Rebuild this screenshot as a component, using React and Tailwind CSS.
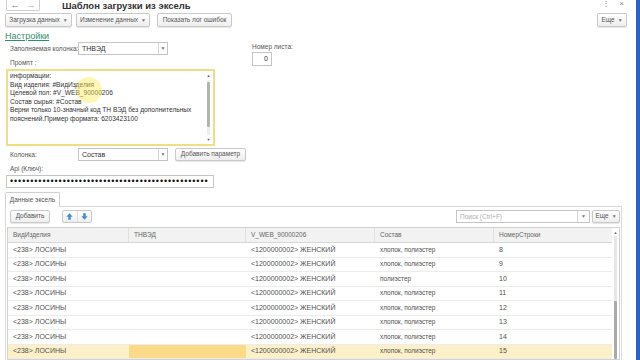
import React from 'react';

const Btn = ({ children, className = '' }) => (
  <div
    className={`h-full flex items-center justify-center gap-[3px] rounded-[2px] border border-[#c9c9c9] bg-linear-to-b from-white to-[#eeeeee] shadow-[0_1px_1px_rgba(0,0,0,0.1)] text-[6.5px] leading-none text-[#555] whitespace-nowrap ${className}`}
  >
    {children}
  </div>
);

const Caret = () => <span className="text-[5px] text-[#777]">▼</span>;

const Combo = ({ value, className = '' }) => (
  <div className={`h-full flex border border-[#c4c4c4] bg-white ${className}`}>
    <div className="flex-1 flex items-center pl-[3px] text-[7px] text-[#333] leading-none">{value}</div>
    <div className="w-[9px] flex items-center justify-center border-l border-[#d4d4d4] text-[5px] text-[#777]">▼</div>
  </div>
);

const rows = [
  { n: 8, s: 'хлопок, полиэстер' },
  { n: 9, s: 'хлопок, полиэстер' },
  { n: 10, s: 'полиэстер' },
  { n: 11, s: 'хлопок, полиэстер' },
  { n: 12, s: 'хлопок, полиэстер' },
  { n: 13, s: 'хлопок, полиэстер' },
  { n: 14, s: 'хлопок, полиэстер' },
  { n: 15, s: 'хлопок, полиэстер', selected: true },
];

const cols = 'grid grid-cols-[121px_117px_129px_119px_1fr]';

export default function App() {
  return (
    <div className="w-[640px] h-[360px] overflow-hidden flex bg-white text-[#4a4a4a] font-['Liberation_Sans',Arial,sans-serif] relative">
      <div className="flex-1 min-w-0 flex flex-col">
        {/* title */}
        <div className="h-[13px] flex items-start shrink-0">
          <div className="ml-[6px] w-[34px] h-[11px] flex border border-t-0 border-[#cfcfcf] rounded-b-[2px] text-[9px] text-[#777] leading-none">
            <span className="flex-1 flex items-center justify-center">←</span>
            <span className="flex-1 flex items-center justify-center text-[#aaa]">→</span>
          </div>
          <div className="ml-[22px] text-[9.5px] leading-[12px] text-[#333] font-bold whitespace-nowrap">Шаблон загрузки из эксель</div>
          <div className="ml-auto mr-[12px] flex gap-[9px] text-[8px] text-[#888] leading-[8px]">
            <span>⋮</span>
            <span>×</span>
          </div>
        </div>

        {/* command bar */}
        <div className="h-[14px] flex pl-[5px] pr-[9px] shrink-0">
          <Btn className="w-[67px]">Загрузка данных <Caret /></Btn>
          <Btn className="w-[74px] ml-[4px]">Изменение данных <Caret /></Btn>
          <Btn className="w-[75px] ml-[7px]">Показать лог ошибок</Btn>
          <Btn className="w-[30px] ml-auto">Еще <Caret /></Btn>
        </div>

        <div className="mt-[4px] ml-[5px] text-[9px] leading-[11px] text-[#2f8f6b] underline shrink-0">Настройки</div>

        {/* settings */}
        <div className="flex shrink-0">
          <div className="w-[246px] pl-[6px] flex flex-col">
            <div className="h-[13px] flex items-center">
              <div className="w-[72px] pl-[4px] text-[6.5px] text-[#555] whitespace-nowrap">Заполняемая колонка:</div>
              <Combo value="ТНВЭД" className="w-[90px]" />
            </div>
            <div className="mt-[4px] pl-[4px] text-[6.5px] leading-[8px] text-[#555]">Промпт :</div>
            <div className="mt-[2px] w-[209px] h-[77px] border-2 border-[#f1dd86] flex relative">
              <div className="flex-1 pl-[2px] pt-[1px] text-[6.6px] leading-[8.5px] text-[#333] whitespace-nowrap">
                <div>информации:</div>
                <div>Вид изделия: #ВидИзделия</div>
                <div>Целевой пол: #V_WEB_90000206</div>
                <div>Состав сырья: #Состав</div>
                <div>Верни только 10-значный код ТН ВЭД без дополнительных</div>
                <div>пояснений.Пример формата: 6203423100</div>
              </div>
              <div className="w-[7px] flex flex-col items-center py-[2px] mr-[1px]">
                <span className="text-[4px] leading-[5px] text-[#666]">▲</span>
                <div className="w-[3px] flex-1 bg-[#eeeeee] my-[2px] flex flex-col">
                  <div className="mt-[2px] h-[45px] bg-[#b4b4b4] rounded-[1px]" />
                </div>
                <span className="text-[4px] leading-[5px] text-[#666]">▼</span>
              </div>
              <div className="absolute left-[68px] top-[6px] w-[26px] h-[26px] rounded-full bg-[rgba(255,236,90,0.45)]" />
            </div>
            <div className="mt-[2px] h-[13px] flex items-center">
              <div className="w-[72px] pl-[4px] text-[6.5px] text-[#555]">Колонка:</div>
              <Combo value="Состав" className="w-[90px]" />
              <Btn className="w-[71px] ml-[7px]">Добавить параметр</Btn>
            </div>
            <div className="mt-[4px] pl-[4px] text-[6.5px] leading-[8px] text-[#555]">Api (Ключ):</div>
            <div className="mt-[2px] w-[208px] h-[13px] border border-[#c4c4c4] flex items-center pl-[3px] text-[9px] leading-none tracking-[0.9px] text-[#111] whitespace-nowrap">
              {'•'.repeat(49)}
            </div>
          </div>
          <div className="ml-[6px] pt-[1px] flex flex-col">
            <div className="text-[6.5px] leading-[8px] text-[#555]">Номер листа:</div>
            <div className="mt-[1px] w-[20px] h-[14px] border border-[#c4c4c4] flex items-center justify-end pr-[3px] text-[7px] text-[#333]">0</div>
          </div>
        </div>

        {/* tabs */}
        <div className="mt-[4px] h-[15px] flex items-end shrink-0">
          <div className="ml-[5px] w-[55px] h-[15px] border border-b-0 border-[#cfcfcf] rounded-t-[2px] flex items-center justify-center text-[6.5px] text-[#555]">
            Данные эксель
          </div>
          <div className="flex-1 mr-[14px] border-b border-[#d6d6d6]" />
        </div>

        <div className="ml-[5px] mr-[14px] flex-1 min-h-0 border-l border-r border-[#dcdcdc] px-[1px] flex flex-col">
          {/* table toolbar */}
          <div className="mt-[3px] h-[13px] flex shrink-0">
            <Btn className="w-[40px] ml-[3px]">Добавить</Btn>
            <div className="ml-[12px] w-[30px] h-full flex rounded-[2px] border border-[#c9c9c9] bg-linear-to-b from-white to-[#eeeeee]">
              <div className="flex-1 flex items-center justify-center border-r border-[#dddddd]">
                <svg width="7" height="7" viewBox="0 0 10 10">
                  <path d="M5 0.5 L9.5 5.5 H6.8 V9.5 H3.2 V5.5 H0.5 Z" fill="#3f8fd6" />
                </svg>
              </div>
              <div className="flex-1 flex items-center justify-center">
                <svg width="7" height="7" viewBox="0 0 10 10">
                  <path d="M5 9.5 L9.5 4.5 H6.8 V0.5 H3.2 V4.5 H0.5 Z" fill="#3f8fd6" />
                </svg>
              </div>
            </div>
            <div className="ml-auto w-[134px] h-full flex border border-[#c4c4c4] bg-white">
              <div className="flex-1 flex items-center pl-[3px] text-[6.5px] text-[#b0b0b0]">Поиск (Ctrl+F)</div>
              <div className="w-[12px] flex items-center justify-center border-l border-[#d4d4d4] text-[5px] text-[#777]">▼</div>
            </div>
            <Btn className="w-[28px] ml-[2px]">Еще <Caret /></Btn>
          </div>

          {/* table */}
          <div className="mt-[4px] flex-1 min-h-0 border border-[#d2d2d2] flex overflow-hidden">
            <div className="flex-1 min-w-0 flex flex-col">
              <div className={`${cols} h-[15px] shrink-0 bg-[#f2f2f2] border-b border-[#d8d8d8] text-[6.5px] text-[#666]`}>
                {['ВидИзделия', 'ТНВЭД', 'V_WEB_90000206', 'Состав', 'НомерСтроки'].map((h, i) => (
                  <div key={h} className={`flex items-center pl-[5px] ${i < 4 ? 'border-r border-[#e0e0e0]' : ''}`}>
                    {h}
                  </div>
                ))}
              </div>
              {rows.map((r) => (
                <div
                  key={r.n}
                  className={`${cols} h-[14.5px] shrink-0 border-b border-[#ececec] text-[7px] text-[#505050] ${r.selected ? 'bg-[#fcf0c8]' : ''}`}
                >
                  <div className="flex items-center pl-[5px]">&lt;238&gt; ЛОСИНЫ</div>
                  <div className={`flex items-center pl-[5px] ${r.selected ? 'bg-[#fbdb88]' : ''}`}></div>
                  <div className="flex items-center pl-[5px]">&lt;1200000002&gt; ЖЕНСКИЙ</div>
                  <div className="flex items-center pl-[5px] text-[6.5px]">{r.s}</div>
                  <div className="flex items-center pl-[5px]">{r.n}</div>
                </div>
              ))}
            </div>
            <div className="w-[7px] flex flex-col items-center pt-[2px]">
              <span className="text-[4px] leading-[5px] text-[#666]">▲</span>
              <div className="w-[3px] flex-1 bg-[#e6e6e6] mt-[1px] flex flex-col justify-end">
                <div className="h-[58px] bg-[#a9a9a9] rounded-[1px]" />
              </div>
            </div>
          </div>
        </div>
      </div>
      <div className="w-[4px] bg-[#2a62c9] shrink-0" />
    </div>
  );
}
